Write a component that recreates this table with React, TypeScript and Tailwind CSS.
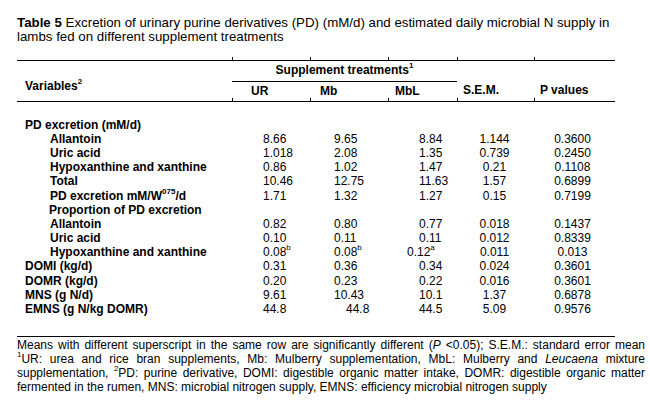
import React from "react";

type Row = {
  label: React.ReactNode;
  lp: string;
  vals?: React.ReactNode[];
  pls?: (string | undefined)[];
};

const Sup = ({ children }: { children: React.ReactNode }) => (
  <sup className="relative -top-[1px] text-[8px] leading-none align-super">{children}</sup>
);

const rows: Row[] = [
  { label: "PD excretion (mM/d)", lp: "pl-[8px]" },
  { label: "Allantoin", lp: "pl-[33px]", vals: ["8.66", "9.65", "8.84", "1.144", "0.3600"] },
  { label: "Uric acid", lp: "pl-[33px]", vals: ["1.018", "2.08", "1.35", "0.739", "0.2450"] },
  { label: "Hypoxanthine and xanthine", lp: "pl-[33px]", vals: ["0.86", "1.02", "1.47", "0.21", "0.1108"] },
  { label: "Total", lp: "pl-[33px]", vals: ["10.46", "12.75", "11.63", "1.57", "0.6899"] },
  {
    label: (
      <>
        PD excretion mM/W<Sup>075</Sup>/d
      </>
    ),
    lp: "pl-[33px]",
    vals: ["1.71", "1.32", "1.27", "0.15", "0.7199"],
  },
  { label: "Proportion of PD excretion", lp: "pl-[32px]" },
  { label: "Allantoin", lp: "pl-[33px]", vals: ["0.82", "0.80", "0.77", "0.018", "0.1437"] },
  { label: "Uric acid", lp: "pl-[33px]", vals: ["0.10", "0.11", "0.11", "0.012", "0.8339"] },
  {
    label: "Hypoxanthine and xanthine",
    lp: "pl-[33px]",
    vals: [
      <>0.08<Sup>b</Sup></>,
      <>0.08<Sup>b</Sup></>,
      <>0.12<Sup>a</Sup></>,
      "0.011",
      "0.013",
    ],
    pls: [undefined, undefined, "pl-[19px]"],
  },
  { label: "DOMI (kg/d)", lp: "pl-[8px]", vals: ["0.31", "0.36", "0.34", "0.024", "0.3601"] },
  { label: "DOMR (kg/d)", lp: "pl-[8px]", vals: ["0.20", "0.23", "0.22", "0.016", "0.3601"] },
  { label: "MNS (g N/d)", lp: "pl-[8px]", vals: ["9.61", "10.43", "10.1", "1.37", "0.6878"] },
  {
    label: "EMNS (g N/kg DOMR)",
    lp: "pl-[8px]",
    vals: ["44.8", "44.8", "44.5", "5.09", "0.9576"],
    pls: [undefined, "pl-[36px]"],
  },
];

const cols = "grid grid-cols-[215px_78px_78px_69px_77px_81px]";
const defaultPl = ["pl-[31px]", "pl-[24px]", "pl-[31px]"];

const Tick = ({ x, top }: { x: string; top: string }) => (
  <span className={`absolute w-px h-[3px] bg-black ${x} ${top}`} />
);

export default function App() {
  return (
    <div className="w-[650px] h-[400px] bg-white text-black font-['Liberation_Sans',Arial,sans-serif] overflow-hidden">
      <div className="pl-[17px] pt-[16px] w-[632px] text-[13.3px] leading-[13.5px]">
        <span className="font-bold">Table 5</span> Excretion of urinary purine derivatives (PD) (mM/d) and
        estimated daily microbial N supply in lambs fed on different supplement treatments
      </div>

      <div className="ml-[17px] w-[598px] mt-[17px]">
        <div className="relative">
          <Tick x="left-[215px]" top="-top-[3px]" />
          <Tick x="left-[293px]" top="-top-[3px]" />
          <Tick x="left-[371px]" top="-top-[3px]" />
          <Tick x="left-[440px]" top="-top-[3px]" />
          <Tick x="left-[517px]" top="-top-[3px]" />
          <Tick x="left-[215px]" top="top-[38px]" />
          <Tick x="left-[293px]" top="top-[38px]" />
          <Tick x="left-[371px]" top="top-[38px]" />
          <Tick x="left-[440px]" top="top-[38px]" />
          <Tick x="left-[517px]" top="top-[38px]" />
          <div className={`${cols} grid-rows-[21px_19px] border-t border-b border-black text-[12px] leading-[14px] font-bold`}>
            <div className="row-span-2 pl-[8px] pt-[18px]">
              Variables<Sup>2</Sup>
            </div>
            <div className="col-span-3 border-b border-black text-center pt-[2px]">
              Supplement treatments<Sup>1</Sup>
            </div>
            <div className="row-span-2 pl-[6px] pt-[22px]">S.E.M.</div>
            <div className="row-span-2 pl-[6px] pt-[22px]">P values</div>
            <div className="pl-[19px] pt-[2px]">UR</div>
            <div className="pl-[10px] pt-[2px]">Mb</div>
            <div className="pl-[7px] pt-[2px]">MbL</div>
          </div>
        </div>

        <div className="pt-[15.6px] pb-[19.5px] border-b border-black text-[12px] leading-[14.2px]">
          {rows.map((r, i) => (
            <div key={i} className={`${cols} h-[14.2px]`}>
              <div className={`${r.lp} font-bold whitespace-nowrap`}>{r.label}</div>
              {r.vals &&
                r.vals.map((v, j) => {
                  if (j < 3) {
                    const pl = (r.pls && r.pls[j]) || defaultPl[j];
                    return (
                      <div key={j} className={`${pl} whitespace-nowrap`}>
                        {v}
                      </div>
                    );
                  }
                  return (
                    <div key={j} className={`text-center whitespace-nowrap ${j === 3 ? "pr-[2px]" : "pr-[4px]"}`}>
                      {v}
                    </div>
                  );
                })}
            </div>
          ))}
        </div>

        <div className="pt-[1px] w-[628px] text-[12px] leading-[14px] text-justify">
          <div className="[text-align-last:justify] whitespace-nowrap">
            Means with different superscript in the same row are significantly different (<i>P</i> &lt;0.05); S.E.M.:
            standard error mean
          </div>
          <div>
            <Sup>1</Sup>UR: urea and rice bran supplements, Mb: Mulberry supplementation, MbL: Mulberry and{" "}
            <i>Leucaena</i> mixture supplementation, <Sup>2</Sup>PD: purine derivative, DOMI: digestible organic
            matter intake, DOMR: digestible organic matter fermented in the rumen, MNS: microbial nitrogen supply,
            EMNS: efficiency microbial nitrogen supply
          </div>
        </div>
      </div>
    </div>
  );
}
